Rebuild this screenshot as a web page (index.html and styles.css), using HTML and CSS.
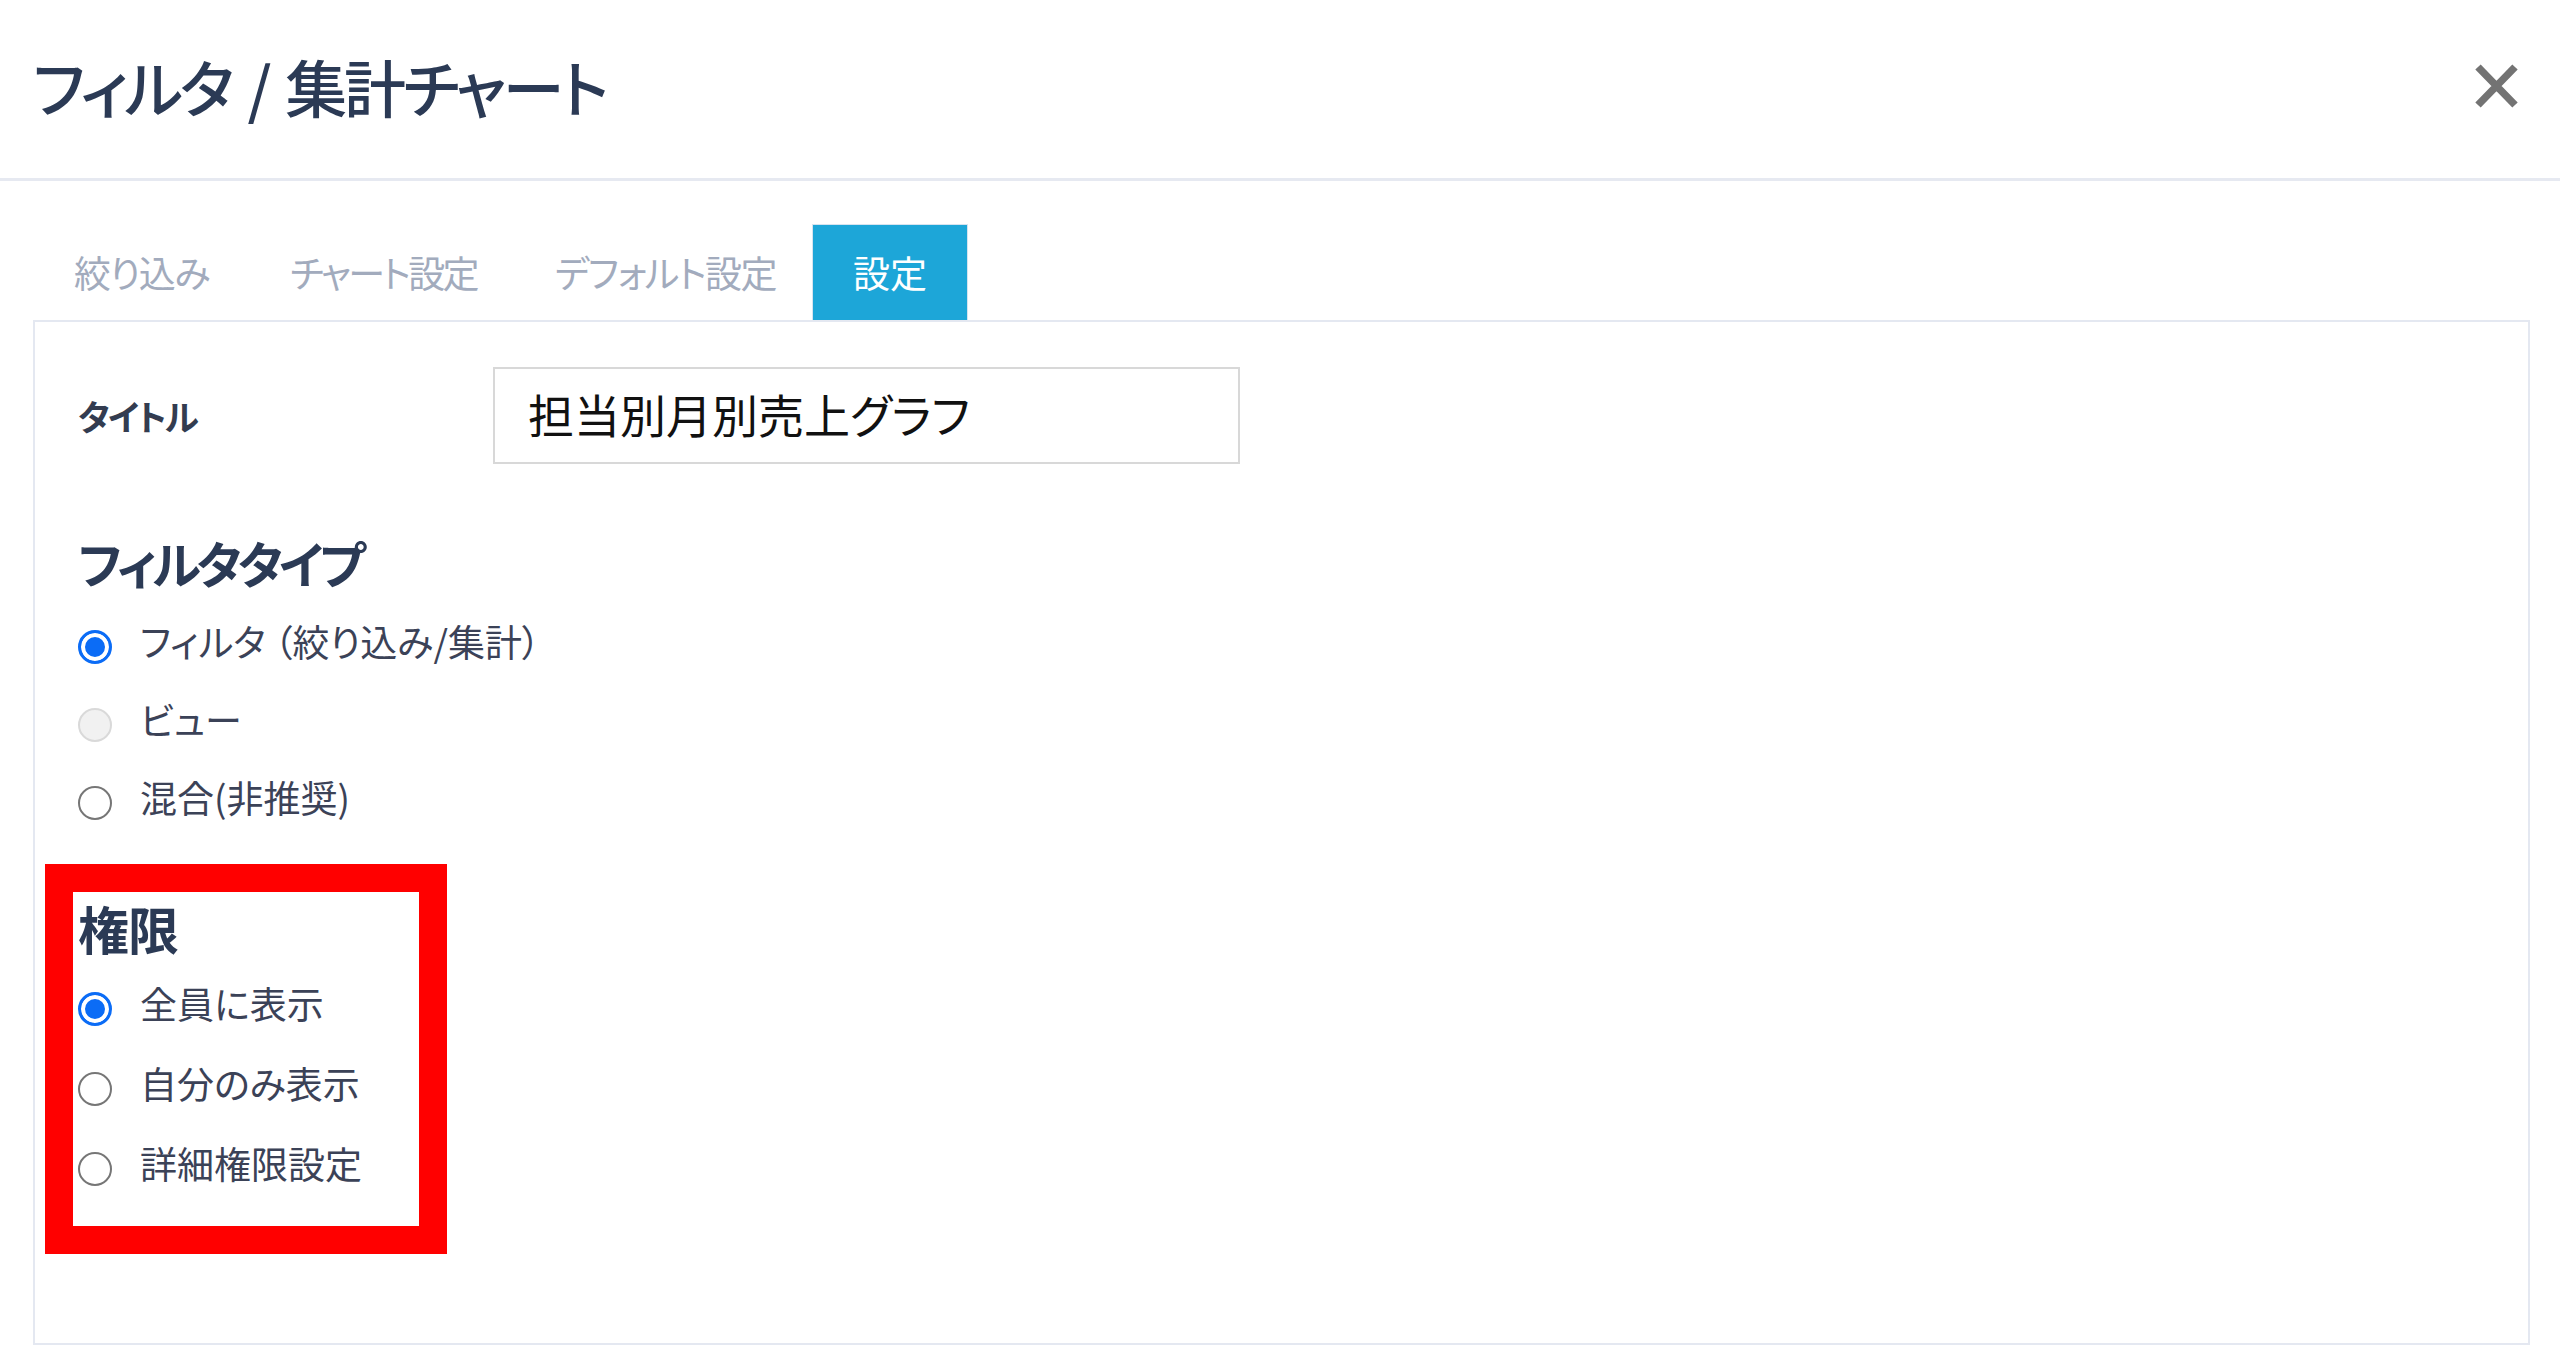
FILE: index.html
```html
<!DOCTYPE html>
<html lang="ja">
<head>
<meta charset="utf-8">
<title>フィルタ / 集計チャート</title>
<link rel="stylesheet" href="styles.css">
</head>
<body>
<div class="dialog">
  <header class="header">
    <h1 class="title">フィルタ / 集計チャート</h1>
    <button class="close" aria-label="閉じる">
      <svg width="47" height="46" viewBox="0 0 47 46"><path d="M5 4 L42 42 M42 4 L5 42" stroke="#737373" stroke-width="7.5" fill="none"/></svg>
    </button>
  </header>
  <div class="body">
    <nav class="tabs">
      <span class="tab">絞り込み</span>
      <span class="tab">チャート設定</span>
      <span class="tab">デフォルト設定</span>
      <span class="tab active">設定</span>
    </nav>
    <section class="panel">
      <div class="field">
        <label class="field-label">タイトル</label>
        <div class="input">担当別月別売上グラフ</div>
      </div>
      <div class="group">
        <h2 class="group-title">フィルタタイプ</h2>
        <ul class="radios">
          <li class="radio-row"><span class="radio checked"></span><span class="radio-text">フィルタ （絞り込み/集計）</span></li>
          <li class="radio-row"><span class="radio disabled"></span><span class="radio-text">ビュー</span></li>
          <li class="radio-row"><span class="radio"></span><span class="radio-text">混合(非推奨)</span></li>
        </ul>
      </div>
      <div class="group highlight">
        <h2 class="group-title">権限</h2>
        <ul class="radios wide">
          <li class="radio-row"><span class="radio checked"></span><span class="radio-text">全員に表示</span></li>
          <li class="radio-row"><span class="radio"></span><span class="radio-text">自分のみ表示</span></li>
          <li class="radio-row"><span class="radio"></span><span class="radio-text">詳細権限設定</span></li>
        </ul>
      </div>
    </section>
  </div>
</div>
</body>
</html>
```

FILE: styles.css
```css
* { box-sizing: border-box; }
html, body { margin: 0; padding: 0; background: #fff; }
body {
  font-family: "Noto Sans CJK JP", "Noto Sans", sans-serif;
  font-feature-settings: "palt" 1;
  color: #3b4257;
}
.dialog { width: 2560px; height: 1363px; overflow: hidden; }

.header {
  height: 181px;
  border-bottom: 3px solid #e6e9f1;
  display: flex;
  align-items: center;
  justify-content: space-between;
  padding: 0 40px 6px 33px;
}
.title {
  margin: 0;
  font-size: 62px;
  font-weight: 500;
  color: #2b3a55;
  line-height: 1;
  letter-spacing: -3.2px;
  word-spacing: 6px;
}
.close {
  border: 0;
  background: none;
  padding: 0;
  width: 47px;
  height: 46px;
  display: flex;
}

.body { padding: 43px 30px 0 33px; }

.tabs { display: flex; height: 96px; }
.tab {
  display: flex;
  align-items: center;
  padding: 0 39px;
  font-size: 37px;
  letter-spacing: -1.5px;
  color: #a2abbd;
  line-height: 1;
}
.tab:first-child { padding-left: 41px; padding-right: 42px; }
.tab:nth-child(2) { letter-spacing: -2.6px; }
.tab:nth-child(3) { padding-right: 36px; }
.tab.active {
  background: #1da6d8;
  color: #fff;
  letter-spacing: 0;
  padding: 0 40px;
  border: 1px solid #d6e3ef;
  border-bottom: 0;
}

.panel {
  height: 1025px;
  border: 2px solid #e4e8f1;
  padding: 45px 0 0 43px;
}

.field { display: flex; align-items: center; }
.field-label {
  width: 415px;
  font-size: 35px;
  font-weight: 700;
  letter-spacing: -2px;
  color: #333c50;
}
.input {
  width: 747px;
  height: 97px;
  border: 2px solid #d8d8d8;
  padding: 0 0 6px 33px;
  display: flex;
  align-items: center;
  font-size: 46px;
  color: #111;
}

.group { margin-top: 67px; }
.group-title {
  margin: 0;
  font-size: 50px;
  line-height: 62px;
  font-weight: 700;
  letter-spacing: -4.5px;
  color: #2b3a55;
}
.radios { list-style: none; margin: 15px 0 0; padding: 0; }
.radio-row {
  height: 78px;
  display: flex;
  align-items: center;
}
.radio {
  width: 34px;
  height: 34px;
  border-radius: 50%;
  border: 2.5px solid #767676;
  background: #fff;
  margin-right: 28px;
  flex: none;
}
.radio.checked {
  border: 3px solid #0b6cf6;
  background: #0b6cf6;
  box-shadow: inset 0 0 0 4px #fff;
}
.radio.disabled {
  border-color: #d9d9d9;
  background: #f1f1f1;
}
.radio-text {
  font-size: 37px;
  color: #3b4257;
  line-height: 1;
  padding-bottom: 12px;
}

.highlight {
  width: 336px;
  margin-top: 55px;
  padding-bottom: 12px;
  outline: 28px solid #ff0000;
  outline-offset: 5px;
}
.highlight .group-title { letter-spacing: -1px; font-size: 51px; }
.radios.wide { margin-top: 10px; }
.radios.wide .radio-row { height: 80px; }
```
